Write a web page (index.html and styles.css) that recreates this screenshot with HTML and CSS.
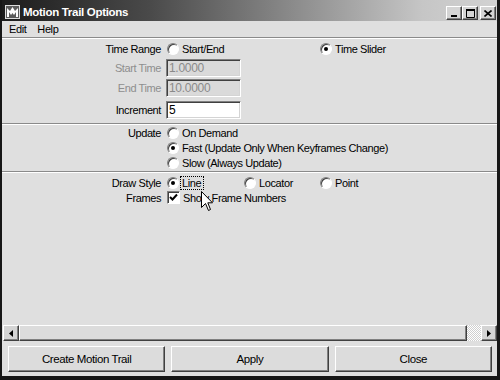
FILE: index.html
```html
<!DOCTYPE html>
<html lang="en">
<head>
    <meta charset="UTF-8">
    <title>Motion Trail Options</title>
    <link rel="stylesheet" href="styles.css">
</head>
<body>
    <div class="window">
        <!-- Title bar -->
        <div class="titlebar">
            <svg class="app-icon" width="15" height="14" viewBox="0 0 15 14">
                <rect x="0.5" y="0.5" width="14" height="13" fill="#5c5c5c" stroke="#ddd"/>
                <path d="M2 12 L2 3 L5 6 L7.5 2 L10 6 L13 3 L13 12 L11 12 L11 7 L9 10 L7.5 8 L6 10 L4 7 L4 12 Z" fill="#fff"/>
            </svg>
            <span class="title">Motion Trail Options</span>
            <div class="caption-buttons">
                <span class="cap-btn">
                    <svg width="8" height="7" viewBox="0 0 8 7"><rect x="1" y="5" width="6" height="2" fill="#000"/></svg>
                </span>
                <span class="cap-btn">
                    <svg width="9" height="9" viewBox="0 0 9 9"><path d="M0.5 1.5 H8.5 V8.5 H0.5 Z" fill="none" stroke="#000"/><rect x="0" y="0" width="9" height="2" fill="#000"/></svg>
                </span>
                <span class="cap-btn close">
                    <svg width="8" height="7" viewBox="0 0 8 7"><path d="M0.5 0.5 L7.5 6.5 M7.5 0.5 L0.5 6.5" stroke="#000" stroke-width="1.6"/></svg>
                </span>
            </div>
        </div>

        <!-- Menu -->
        <div class="menubar">
            <span>Edit</span>
            <span>Help</span>
        </div>

        <div class="content">
            <div class="section first">
                <div class="row">
                    <span class="label">Time Range</span>
                    <div class="choices">
                        <span class="opt span2"><span class="radio"></span>Start/End</span>
                        <span class="opt"><span class="radio on"></span>Time Slider</span>
                    </div>
                </div>
                <div class="row field-row start">
                    <span class="label dim">Start Time</span>
                    <span class="field disabled">1.0000</span>
                </div>
                <div class="row field-row end">
                    <span class="label dim">End Time</span>
                    <span class="field disabled">10.0000</span>
                </div>
                <div class="row field-row inc">
                    <span class="label">Increment</span>
                    <span class="field">5</span>
                </div>
            </div>
            <div class="sep"></div>

            <div class="section">
                <div class="row">
                    <span class="label">Update</span>
                    <span class="opt"><span class="radio"></span>On Demand</span>
                </div>
                <div class="row">
                    <span class="label"></span>
                    <span class="opt"><span class="radio on"></span>Fast (Update Only When Keyframes Change)</span>
                </div>
                <div class="row">
                    <span class="label"></span>
                    <span class="opt"><span class="radio"></span>Slow (Always Update)</span>
                </div>
            </div>
            <div class="sep"></div>

            <div class="section last">
                <div class="row">
                    <span class="label">Draw Style</span>
                    <div class="choices">
                        <span class="opt"><span class="radio on"></span><span class="focus">Line</span></span>
                        <span class="opt"><span class="radio"></span>Locator</span>
                        <span class="opt"><span class="radio"></span>Point</span>
                    </div>
                </div>
                <div class="row">
                    <span class="label">Frames</span>
                    <span class="opt">
                        <span class="check">
                            <svg width="9" height="9" viewBox="0 0 9 9"><path d="M1 4 L3.5 6.5 L8 1.5" fill="none" stroke="#000" stroke-width="2"/></svg>
                        </span>Show Frame Numbers
                    </span>
                </div>
            </div>
        </div>

        <!-- Horizontal scroll bar -->
        <div class="scrollbar">
            <span class="sb-btn">
                <svg width="4" height="7" viewBox="0 0 4 7"><path d="M4 0 L0 3.5 L4 7 Z" fill="#000"/></svg>
            </span>
            <span class="sb-thumb"></span>
            <span class="sb-track"></span>
            <span class="sb-btn">
                <svg width="4" height="7" viewBox="0 0 4 7"><path d="M0 0 L4 3.5 L0 7 Z" fill="#000"/></svg>
            </span>
        </div>

        <div class="buttons">
            <button>Create Motion Trail</button>
            <button>Apply</button>
            <button>Close</button>
        </div>

        <svg class="pointer" width="13" height="21" viewBox="0 0 13 21">
            <path d="M0.5 0.5 L0.5 16.5 L4.5 12.5 L7.5 19.5 L9.5 18.5 L6.8 11.8 L11.5 11.8 Z" fill="#fff" stroke="#000"/>
        </svg>
    </div>
</body>
</html>
```

FILE: styles.css
```css
body {
    margin: 0;
    width: 500px;
    height: 380px;
    overflow: hidden;
    font-family: "Liberation Sans", Arial, sans-serif;
    font-size: 11px;
    letter-spacing: -0.4px;
    color: #000;
    background: #dfdfdf;
}
.window {
    position: relative;
    display: flex;
    flex-direction: column;
    height: 380px;
    box-sizing: border-box;
    border-left: 2px solid #161616;
    border-right: 3px solid #161616;
    border-bottom: 4px solid #161616;
    background: #dfdfdf;
}
.titlebar {
    display: flex;
    align-items: center;
    height: 21px;
    padding: 0 1px 0 3px;
    background: linear-gradient(to right, #1c1c1c 0%, #4a4a4a 30%, #c6c6c6 85%, #d2d2d2 100%);
    color: #fff;
}
.app-icon {
    margin-top: 3px;
    margin-right: 3px;
}
.title {
    flex: 1;
    font-weight: bold;
    font-size: 11.5px;
    letter-spacing: -0.3px;
    margin-top: 3px;
}
.caption-buttons {
    display: flex;
    margin-top: 5px;
}
.cap-btn {
    display: flex;
    align-items: center;
    justify-content: center;
    width: 16px;
    height: 14px;
    box-sizing: border-box;
    background: #d4d4d4;
    border: 1px solid;
    border-color: #fff #404040 #404040 #fff;
    box-shadow: inset -1px -1px 0 #808080;
}
.cap-btn.close {
    margin-left: 2px;
}
.menubar {
    display: flex;
    gap: 11px;
    align-items: center;
    height: 16px;
    padding: 0 0 0 7px;
    border-bottom: 1px solid #8a8a8a;
    box-shadow: 0 1px 0 #fff;
}
.content {
    flex: 1;
    padding-top: 2px;
}
.section {
    display: flex;
    flex-direction: column;
}
.section.first {
    padding-top: 1px;
    padding-bottom: 3px;
}
.section.last {
    padding-top: 2px;
}
.row {
    display: flex;
    align-items: center;
    height: 15px;
}
.field-row {
    height: 18px;
}
.field-row.start {
    margin-top: 3px;
}
.field-row.end {
    margin-top: 2px;
}
.field-row.inc {
    margin-top: 4px;
}
.label {
    width: 165px;
    flex-shrink: 0;
    box-sizing: border-box;
    padding-right: 6px;
    text-align: right;
}
.label.dim {
    color: #8e8e8e;
}
.field {
    display: flex;
    align-items: center;
    width: 75px;
    height: 18px;
    margin-left: -1px;
    box-sizing: border-box;
    padding-left: 2px;
    background: #fff;
    border: 1px solid;
    border-color: #808080 #fff #fff #808080;
    box-shadow: inset 1px 1px 0 #404040, inset -1px -1px 0 #d4d4d4;
    font-size: 12px;
    letter-spacing: -0.3px;
}
.field.disabled {
    background: #dadada;
    color: #8a8a8a;
}
.sep {
    height: 1px;
    margin-top: 1px;
    background: #8a8a8a;
    border-bottom: 1px solid #fff;
}
.choices {
    display: grid;
    grid-template-columns: 77px 76px auto;
}
.opt {
    display: flex;
    align-items: center;
    gap: 3px;
    white-space: nowrap;
}
.span2 {
    grid-column: span 2;
}
.radio {
    position: relative;
    width: 12px;
    height: 12px;
    flex-shrink: 0;
    box-sizing: border-box;
    border-radius: 50%;
    background: #fff;
    border: 1px solid;
    border-color: #808080 #fff #fff #808080;
    box-shadow: inset 1px 1px 0 #404040;
}
.radio.on::after {
    content: "";
    position: absolute;
    left: 3px;
    top: 3px;
    width: 4px;
    height: 4px;
    border-radius: 50%;
    background: #000;
}
.focus {
    outline: 1px dotted #000;
    outline-offset: 0;
    padding: 0 2px 0 1px;
    margin-left: -1px;
}
.check {
    display: flex;
    align-items: center;
    justify-content: center;
    width: 13px;
    height: 13px;
    box-sizing: border-box;
    background: #fff;
    border: 1px solid;
    border-color: #808080 #fff #fff #808080;
    box-shadow: inset 1px 1px 0 #404040;
}
.scrollbar {
    display: flex;
    height: 16px;
    margin: 0 0 0 1px;
}
.sb-btn {
    display: flex;
    align-items: center;
    justify-content: center;
    width: 16px;
    height: 16px;
    box-sizing: border-box;
    background: #d4d4d4;
    border: 1px solid;
    border-color: #fff #404040 #404040 #fff;
    box-shadow: inset -1px -1px 0 #808080;
}
.sb-thumb {
    flex: 1;
    box-sizing: border-box;
    background: #dcdcdc;
    border: 1px solid;
    border-color: #fff #404040 #404040 #fff;
    box-shadow: inset -1px -1px 0 #808080;
}
.sb-track {
    width: 14px;
    background: repeating-conic-gradient(#fff 0 25%, #cfcfcf 0 50%) 0 0 / 2px 2px;
}
.buttons {
    display: flex;
    gap: 6px;
    padding: 5px 5px 4px 6px;
}
.buttons button {
    flex: 1;
    height: 26px;
    font-family: "Liberation Sans", Arial, sans-serif;
    font-size: 11.5px;
    letter-spacing: -0.4px;
    color: #000;
    background: #dcdcdc;
    border: 1px solid;
    border-color: #fff #404040 #404040 #fff;
    box-shadow: inset -1px -1px 0 #808080;
}
.pointer {
    position: absolute;
    left: 199px;
    top: 191px;
}
```
